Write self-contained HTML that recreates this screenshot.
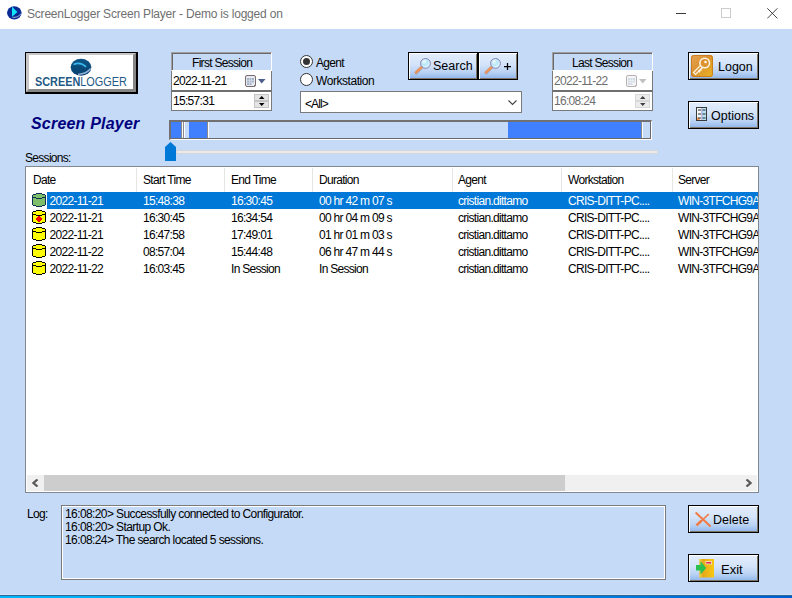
<!DOCTYPE html>
<html><head><meta charset="utf-8">
<style>
*{margin:0;padding:0;box-sizing:border-box}
html,body{width:792px;height:598px;overflow:hidden;background:#C5DAF6;font-family:"Liberation Sans",sans-serif;font-size:12px;color:#000}
.a{position:absolute}
.t{position:absolute;white-space:nowrap;line-height:14px}
.ms{letter-spacing:-0.7px}
#title{left:0;top:0;width:792px;height:29px;background:#fff}
.btn{position:absolute;border:1px solid #000;box-shadow:inset 1px 1px 0 #fff,inset -1px -1px 0 #7f7565;background:linear-gradient(#E4EEFC 0%,#D3E3F9 45%,#B8D1F3 75%,#8DB4EC 100%)}
.grp{position:absolute;width:101px;height:58px}
.glab{position:absolute;left:0;top:0;width:101px;height:18px;border-top:2px solid #6f6f6f;border-left:2px solid #6f6f6f;border-right:1px solid #fff;border-bottom:1px solid #fff;background:#C5DAF6;text-align:center}
.gbox{position:absolute;left:0;width:101px;height:21px;background:#fff;border:1px solid #6f6f6f}
.lv{position:absolute;left:25px;top:166px;width:734px;height:327px;border:1px solid #828790;background:#fff;overflow:hidden}
.row{position:absolute;left:0;height:17px;width:732px}
.cell{position:absolute;top:1px;line-height:17px;white-space:nowrap;letter-spacing:-0.7px}
</style></head><body>
<!-- Title bar -->
<div id="title" class="a">
  <svg class="a" style="left:6px;top:5px" width="17" height="16" viewBox="0 0 17 16">
    <ellipse cx="8.3" cy="7.8" rx="7.3" ry="6.6" fill="#0a2a96"/>
    <path d="M6 1.8 L11.4 7 L6 11.7 Z" fill="#12e6fa"/>
    <path d="M6.5 12.3 Q12 13 15.2 8.5" stroke="#a0b4d0" stroke-width="1" fill="none"/>
  </svg>
  <div class="t" style="left:27px;top:7px;font-size:12px;color:#707070;letter-spacing:-0.2px">ScreenLogger Screen Player - Demo is logged on</div>
  <div class="a" style="left:676px;top:13px;width:10px;height:1px;background:#3a3a3a"></div>
  <div class="a" style="left:721px;top:8px;width:10px;height:10px;border:1px solid #ccc"></div>
  <svg class="a" style="left:767px;top:8px" width="11" height="11" viewBox="0 0 11 11"><path d="M0.3 0.3 L10.4 10.4 M10.4 0.3 L0.3 10.4" stroke="#3a3a3a" stroke-width="0.95"/></svg>
</div>

<!-- Logo -->
<div class="a" style="left:25px;top:52px;width:113px;height:42px;border-top:1px solid #000;border-left:1px solid #000;border-right:2px solid #000;border-bottom:2px solid #000">
  <div class="a" style="left:0;top:0;width:110px;height:39px;background:#fff;border-top:2px solid #c6c6c6;border-left:3px solid #c6c6c6;border-right:3px solid #868686;border-bottom:3px solid #868686"></div>
  <svg class="a" style="left:43px;top:4px" width="24" height="20" viewBox="0 0 24 20">
    <defs><linearGradient id="lgo" x1="0" y1="0" x2="0" y2="1"><stop offset="0" stop-color="#0d5688"/><stop offset="1" stop-color="#073f6c"/></linearGradient></defs>
    <ellipse cx="12" cy="10.2" rx="10.3" ry="8.5" fill="url(#lgo)"/>
    <path d="M4.5 7.5 Q11.5 4.2 17 9.8" stroke="#3ab8ec" stroke-width="1.7" fill="none"/>
    <path d="M9 17.3 Q17.5 17 21.6 11.5" stroke="#90b4dc" stroke-width="1.3" fill="none"/>
  </svg>
  <div class="t" style="left:9px;top:22px;font-size:12.5px;color:#1f5a86;transform:scaleX(0.87);transform-origin:0 0"><b>SCREEN</b>LOGGER</div>
</div>
<div class="t" style="left:31px;top:115px;font-size:16px;font-weight:bold;font-style:italic;color:#00007f;line-height:18px;letter-spacing:0.2px">Screen Player</div>

<!-- First session -->
<div class="a" style="left:171px;top:52px;width:101px;height:19px;border-top:1px solid #a0a0a0;border-left:1px solid #a0a0a0;border-right:1px solid #fff;border-bottom:1px solid #fff;box-shadow:inset 1px 1px 0 #696969"></div>
<div class="t ms" style="left:192px;top:56px;width:60px;text-align:left">First Session</div>
<div class="a" style="left:171px;top:71px;width:101px;height:21px;background:#fff;border-left:1px solid #7a7a7a;border-right:1px solid #7a7a7a;border-bottom:2px solid #6f6f6f"></div>
<div class="t ms" style="left:173px;top:74px;color:#000">2022-11-21</div>
<svg class="a" style="left:245px;top:75px" width="12" height="13" viewBox="0 0 12 13">
<rect x="0.5" y="0.5" width="10" height="11" rx="1.5" fill="#e6eaf2" stroke="#7a6a6a"/>
<g fill="#a8b4c8"><rect x="2" y="3" width="2" height="2"/><rect x="4.5" y="3" width="2" height="2"/><rect x="7" y="3" width="2" height="2"/><rect x="2" y="5.5" width="2" height="2"/><rect x="4.5" y="5.5" width="2" height="2"/><rect x="7" y="5.5" width="2" height="2"/><rect x="2" y="8" width="2" height="2"/><rect x="4.5" y="8" width="2" height="2"/></g>
<path d="M8 12 L11 9" stroke="#7a6a6a" stroke-width="1"/>
</svg>
<svg class="a" style="left:258px;top:79px" width="8" height="5" viewBox="0 0 8 5"><path d="M0 0 H7.5 L3.75 4.5 Z" fill="#4a5f8a"/></svg>
<div class="a" style="left:171px;top:92px;width:101px;height:19px;background:#fff;border-left:1px solid #7a7a7a;border-right:1px solid #7a7a7a;border-bottom:1px solid #7a7a7a"></div>
<div class="t ms" style="left:173px;top:94px;color:#000">15:57:31</div>
<div class="a" style="left:254px;top:94px;width:15px;height:7px;background:#e4e4e4;border:1px solid #c4c4c4"></div>
<div class="a" style="left:254px;top:101px;width:15px;height:7px;background:#e4e4e4;border:1px solid #c4c4c4"></div>
<svg class="a" style="left:259px;top:96px" width="6" height="11" viewBox="0 0 6 11"><path d="M0 3 H5.5 L2.75 0 Z M0 7 H5.5 L2.75 10 Z" fill="#000"/></svg>

<!-- Radios -->
<div class="a" style="left:300px;top:55px;width:13px;height:13px;border-radius:50%;border:1px solid #333;background:#fff"><div class="a" style="left:2px;top:2px;width:7px;height:7px;border-radius:50%;background:#333"></div></div>
<div class="t ms" style="left:316px;top:56px">Agent</div>
<div class="a" style="left:300px;top:73px;width:13px;height:13px;border-radius:50%;border:1px solid #333;background:#fff"></div>
<div class="t" style="left:316px;top:74px;letter-spacing:-0.45px">Workstation</div>
<div class="a" style="left:300px;top:91px;width:222px;height:22px;border:1px solid #7a7a7a;background:#fff">
  <div class="t" style="left:4px;top:5px;letter-spacing:-0.9px">&lt;All&gt;</div>
  <svg class="a" style="left:207px;top:8px" width="10" height="6" viewBox="0 0 10 6"><path d="M0.5 0.5 L4.5 4.5 L8.5 0.5" stroke="#444" stroke-width="1.1" fill="none"/></svg>
</div>

<!-- Search buttons -->
<div class="btn" style="left:408px;top:52px;width:70px;height:28px"></div>
<div class="btn" style="left:478px;top:52px;width:40px;height:28px"></div>
<svg class="a" style="left:412px;top:55px" width="20" height="20" viewBox="0 0 20 20">
<defs><radialGradient id="lg1" cx="0.35" cy="0.3" r="0.75"><stop offset="0" stop-color="#f4fdff"/><stop offset="0.45" stop-color="#b9e6f8"/><stop offset="0.85" stop-color="#d8f6ff"/><stop offset="1" stop-color="#ffffff"/></radialGradient></defs>
<path d="M9.6 12.4 L4.2 17.6" stroke="#5a4a3a" stroke-width="3.2" stroke-linecap="round" opacity="0.35"/>
<path d="M9.4 12.4 L4.0 17.4" stroke="#f2935a" stroke-width="2.6" stroke-linecap="round"/>
<circle cx="13.5" cy="8.4" r="4.9" fill="url(#lg1)" stroke="#8680b0" stroke-width="1"/>
</svg><svg class="a" style="left:482px;top:55px" width="20" height="20" viewBox="0 0 20 20">
<defs><radialGradient id="lg2" cx="0.35" cy="0.3" r="0.75"><stop offset="0" stop-color="#f4fdff"/><stop offset="0.45" stop-color="#b9e6f8"/><stop offset="0.85" stop-color="#d8f6ff"/><stop offset="1" stop-color="#ffffff"/></radialGradient></defs>
<path d="M9.6 12.4 L4.2 17.6" stroke="#5a4a3a" stroke-width="3.2" stroke-linecap="round" opacity="0.35"/>
<path d="M9.4 12.4 L4.0 17.4" stroke="#f2935a" stroke-width="2.6" stroke-linecap="round"/>
<circle cx="13.5" cy="8.4" r="4.9" fill="url(#lg2)" stroke="#8680b0" stroke-width="1"/>
</svg>
<div class="t" style="left:433px;top:59px;font-size:12.5px">Search</div>
<svg class="a" style="left:504px;top:63px" width="8" height="8" viewBox="0 0 8 8"><path d="M0 3.5 H7 M3.5 0 V7" stroke="#000" stroke-width="1.25"/></svg>

<!-- Last session -->
<div class="a" style="left:552px;top:52px;width:101px;height:19px;border-top:1px solid #a0a0a0;border-left:1px solid #a0a0a0;border-right:1px solid #fff;border-bottom:1px solid #fff;box-shadow:inset 1px 1px 0 #696969"></div>
<div class="t ms" style="left:572px;top:56px;width:60px;text-align:left">Last Session</div>
<div class="a" style="left:552px;top:71px;width:101px;height:21px;background:#fff;border-left:1px solid #7a7a7a;border-right:1px solid #7a7a7a;border-bottom:2px solid #6f6f6f"></div>
<div class="t ms" style="left:554px;top:74px;color:#6d6d6d">2022-11-22</div>
<svg class="a" style="left:626px;top:75px" width="12" height="13" viewBox="0 0 12 13">
<rect x="0.5" y="0.5" width="10" height="11" rx="1.5" fill="#f4f6fa" stroke="#b8b0b0"/>
<g fill="#d4dae4"><rect x="2" y="3" width="2" height="2"/><rect x="4.5" y="3" width="2" height="2"/><rect x="7" y="3" width="2" height="2"/><rect x="2" y="5.5" width="2" height="2"/><rect x="4.5" y="5.5" width="2" height="2"/><rect x="7" y="5.5" width="2" height="2"/><rect x="2" y="8" width="2" height="2"/><rect x="4.5" y="8" width="2" height="2"/></g>
<path d="M8 12 L11 9" stroke="#b8b0b0" stroke-width="1"/>
</svg>
<svg class="a" style="left:639px;top:79px" width="8" height="5" viewBox="0 0 8 5"><path d="M0 0 H7.5 L3.75 4.5 Z" fill="#c0c0c0"/></svg>
<div class="a" style="left:552px;top:92px;width:101px;height:19px;background:#fff;border-left:1px solid #7a7a7a;border-right:1px solid #7a7a7a;border-bottom:1px solid #7a7a7a"></div>
<div class="t ms" style="left:554px;top:94px;color:#6d6d6d">16:08:24</div>
<div class="a" style="left:635px;top:94px;width:15px;height:7px;background:#ececec;border:1px solid #d8d8d8"></div>
<div class="a" style="left:635px;top:101px;width:15px;height:7px;background:#ececec;border:1px solid #d8d8d8"></div>
<svg class="a" style="left:640px;top:96px" width="6" height="11" viewBox="0 0 6 11"><path d="M0 3 H5.5 L2.75 0 Z M0 7 H5.5 L2.75 10 Z" fill="#404040"/></svg>

<!-- Right buttons -->
<div class="btn" style="left:688px;top:52px;width:71px;height:28px"></div>
<svg class="a" style="left:691px;top:55px" width="22" height="22" viewBox="0 0 22 22">
<defs><linearGradient id="keyg" x1="0" y1="0" x2="1" y2="1"><stop offset="0" stop-color="#e6a458"/><stop offset="0.45" stop-color="#dc9230"/><stop offset="1" stop-color="#e9b424"/></linearGradient></defs>
<rect x="0" y="0" width="22" height="22" rx="2.8" fill="url(#keyg)"/>
<rect x="0.5" y="0.5" width="21" height="21" rx="2.5" fill="none" stroke="#c27414" stroke-width="1" opacity="0.75"/>
<path d="M10 12 L4.6 17.4" stroke="#fff6e6" stroke-width="4.2" stroke-linecap="square"/>
<path d="M10 12 L4.6 17.4" stroke="#dc9230" stroke-width="1.6" stroke-linecap="square"/>
<path d="M7.4 15.4 L9.2 17.2 M8.9 13.9 L10.6 15.6" stroke="#fff6e6" stroke-width="1.4"/>
<circle cx="13.7" cy="8" r="4.8" fill="#dc9230" stroke="#fff6e6" stroke-width="1.5"/>
<circle cx="14.5" cy="7" r="1.3" fill="#fff6e6"/>
</svg>
<div class="t" style="left:718px;top:60px;font-size:12.5px">Logon</div>
<div class="btn" style="left:688px;top:101px;width:71px;height:28px"></div>
<svg class="a" style="left:695px;top:106px" width="14" height="16" viewBox="0 0 14 16">
<rect x="1.5" y="1.5" width="10" height="13" fill="#f6f9fc"/>
<path d="M7 2 L11.5 2 L11.5 14 L7 14 Z" fill="#b8e4f6"/>
<path d="M2 14.2 L2 11.6 Q4.2 11 5.2 14.2 Z" fill="#f09848"/>
<path d="M6.8 2 V14" stroke="#9080c0" stroke-width="0.7"/>
<g stroke="#2a2a2a" stroke-width="1"><path d="M3 4 H6 M7.5 4 H10.5 M3 8 H6 M7.5 8 H10.5 M3 12 H6 M7.5 12 H10.5"/></g>
<rect x="1.5" y="1.5" width="10" height="13" fill="none" stroke="#3a3a3a" stroke-width="1"/>
</svg>
<div class="t" style="left:711px;top:109px;font-size:12.5px">Options</div>

<!-- Timeline -->
<div class="a" style="left:169px;top:120px;width:483px;height:20px;border-top:2px solid #727070;border-left:2px solid #727070;border-right:1px solid #fff;border-bottom:1px solid #fff">
  <div class="a" style="left:0;top:0;width:480px;height:17px;border-right:1px solid #6a6a6a;border-bottom:1px solid #6a6a6a"></div>
</div>
<div class="a" style="left:171px;top:122px;width:10px;height:16px;background:#4080FF"></div>
<div class="a" style="left:181px;top:122px;width:1px;height:16px;background:#8a8a8a"></div>
<div class="a" style="left:182px;top:122px;width:1px;height:16px;background:#fff"></div>
<div class="a" style="left:183px;top:122px;width:1px;height:16px;background:#8a8a8a"></div>
<div class="a" style="left:184px;top:122px;width:1px;height:16px;background:#fff"></div>
<div class="a" style="left:189px;top:122px;width:18px;height:16px;background:#4080FF"></div>
<div class="a" style="left:207px;top:122px;width:1px;height:16px;background:#8a8a8a"></div>
<div class="a" style="left:208px;top:122px;width:1px;height:16px;background:#fff"></div>
<div class="a" style="left:508px;top:122px;width:133px;height:16px;background:#4080FF"></div>
<div class="a" style="left:641px;top:122px;width:1px;height:16px;background:#8a8a8a"></div>
<div class="a" style="left:642px;top:122px;width:1px;height:16px;background:#fff"></div>

<!-- Slider -->
<div class="a" style="left:176px;top:150px;width:482px;height:4px;background:#e7eaea;border:1px solid #d6d6d6"></div>
<svg class="a" style="left:165px;top:142px" width="11" height="19" viewBox="0 0 11 19"><path d="M5.5 0 L11 5 L11 19 L0 19 L0 5 Z" fill="#0078d7"/></svg>

<div class="t ms" style="left:25px;top:151px">Sessions:</div>

<!-- List view -->
<div class="lv">
<div class="a" style="left:110px;top:1px;width:1px;height:24px;background:#e5e5e5"></div><div class="a" style="left:198px;top:1px;width:1px;height:24px;background:#e5e5e5"></div><div class="a" style="left:286px;top:1px;width:1px;height:24px;background:#e5e5e5"></div><div class="a" style="left:426px;top:1px;width:1px;height:24px;background:#e5e5e5"></div><div class="a" style="left:535px;top:1px;width:1px;height:24px;background:#e5e5e5"></div><div class="a" style="left:646px;top:1px;width:1px;height:24px;background:#e5e5e5"></div>
<div class="t ms" style="left:7px;top:6px">Date</div><div class="t ms" style="left:117px;top:6px">Start Time</div><div class="t ms" style="left:205px;top:6px">End Time</div><div class="t ms" style="left:293px;top:6px">Duration</div><div class="t ms" style="left:432px;top:6px">Agent</div><div class="t ms" style="left:542px;top:6px">Workstation</div><div class="t ms" style="left:652px;top:6px">Server</div>
<div class="row" style="top:25px;color:#fff"><div class="a" style="left:21px;top:0;width:711px;height:17px;background:#0078d7"></div><svg class="a" style="left:4px;top:0" width="16" height="16" viewBox="0 0 16 16" shape-rendering="crispEdges"><path d="M6 2h6v1h-6zM3 3h12v1h-12zM3 4h12v1h-12zM6 5h6v1h-6zM3 6h3v1h-3zM12 6h3v1h-3zM3 7h12v1h-12zM3 8h12v1h-12zM3 9h12v1h-12zM3 10h12v1h-12zM3 11h12v1h-12zM3 12h12v1h-12zM6 13h6v1h-6z" fill="#7fbf6a"/><path d="M6 1h6v1h-6zM3 2h3v1h-3zM12 2h3v1h-3zM2 3h1v1h-1zM15 3h1v1h-1zM2 4h1v1h-1zM15 4h1v1h-1zM2 5h4v1h-4zM12 5h4v1h-4zM2 6h1v1h-1zM6 6h6v1h-6zM15 6h1v1h-1zM2 7h1v1h-1zM15 7h1v1h-1zM2 8h1v1h-1zM15 8h1v1h-1zM2 9h1v1h-1zM15 9h1v1h-1zM2 10h1v1h-1zM15 10h1v1h-1zM2 11h1v1h-1zM15 11h1v1h-1zM2 12h1v1h-1zM15 12h1v1h-1zM3 13h3v1h-3zM12 13h3v1h-3zM6 14h6v1h-6z" fill="#0d2f55"/></svg><div class="cell" style="left:23.5px">2022-11-21</div><div class="cell" style="left:117px">15:48:38</div><div class="cell" style="left:205px">16:30:45</div><div class="cell" style="left:293px">00 hr 42 m 07 s</div><div class="cell" style="left:432px">cristian.dittamo</div><div class="cell" style="left:542px">CRIS-DITT-PC....</div><div class="cell" style="left:652px">WIN-3TFCHG9A</div></div>
<div class="row" style="top:42px;color:#000"><svg class="a" style="left:4px;top:0" width="16" height="16" viewBox="0 0 16 16" shape-rendering="crispEdges"><path d="M6 2h6v1h-6zM3 3h12v1h-12zM3 4h12v1h-12zM6 5h6v1h-6zM3 6h3v1h-3zM12 6h3v1h-3zM3 7h12v1h-12zM3 8h12v1h-12zM3 9h12v1h-12zM3 10h12v1h-12zM3 11h12v1h-12zM3 12h12v1h-12zM6 13h6v1h-6z" fill="#ffff00"/><path d="M6 1h6v1h-6zM3 2h3v1h-3zM12 2h3v1h-3zM2 3h1v1h-1zM15 3h1v1h-1zM2 4h1v1h-1zM15 4h1v1h-1zM2 5h4v1h-4zM12 5h4v1h-4zM2 6h1v1h-1zM6 6h6v1h-6zM15 6h1v1h-1zM2 7h1v1h-1zM15 7h1v1h-1zM2 8h1v1h-1zM15 8h1v1h-1zM2 9h1v1h-1zM15 9h1v1h-1zM2 10h1v1h-1zM15 10h1v1h-1zM2 11h1v1h-1zM15 11h1v1h-1zM2 12h1v1h-1zM15 12h1v1h-1zM3 13h3v1h-3zM12 13h3v1h-3zM6 14h6v1h-6z" fill="#000"/><path d="M8 7h2v1h-2zM7 8h4v1h-4zM6 9h6v1h-6zM6 10h6v1h-6zM7 11h4v1h-4zM8 12h2v1h-2z" fill="#ff0000"/></svg><div class="cell" style="left:23.5px">2022-11-21</div><div class="cell" style="left:117px">16:30:45</div><div class="cell" style="left:205px">16:34:54</div><div class="cell" style="left:293px">00 hr 04 m 09 s</div><div class="cell" style="left:432px">cristian.dittamo</div><div class="cell" style="left:542px">CRIS-DITT-PC....</div><div class="cell" style="left:652px">WIN-3TFCHG9A</div></div>
<div class="row" style="top:59px;color:#000"><svg class="a" style="left:4px;top:0" width="16" height="16" viewBox="0 0 16 16" shape-rendering="crispEdges"><path d="M6 2h6v1h-6zM3 3h12v1h-12zM3 4h12v1h-12zM6 5h6v1h-6zM3 6h3v1h-3zM12 6h3v1h-3zM3 7h12v1h-12zM3 8h12v1h-12zM3 9h12v1h-12zM3 10h12v1h-12zM3 11h12v1h-12zM3 12h12v1h-12zM6 13h6v1h-6z" fill="#ffff00"/><path d="M6 1h6v1h-6zM3 2h3v1h-3zM12 2h3v1h-3zM2 3h1v1h-1zM15 3h1v1h-1zM2 4h1v1h-1zM15 4h1v1h-1zM2 5h4v1h-4zM12 5h4v1h-4zM2 6h1v1h-1zM6 6h6v1h-6zM15 6h1v1h-1zM2 7h1v1h-1zM15 7h1v1h-1zM2 8h1v1h-1zM15 8h1v1h-1zM2 9h1v1h-1zM15 9h1v1h-1zM2 10h1v1h-1zM15 10h1v1h-1zM2 11h1v1h-1zM15 11h1v1h-1zM2 12h1v1h-1zM15 12h1v1h-1zM3 13h3v1h-3zM12 13h3v1h-3zM6 14h6v1h-6z" fill="#000"/></svg><div class="cell" style="left:23.5px">2022-11-21</div><div class="cell" style="left:117px">16:47:58</div><div class="cell" style="left:205px">17:49:01</div><div class="cell" style="left:293px">01 hr 01 m 03 s</div><div class="cell" style="left:432px">cristian.dittamo</div><div class="cell" style="left:542px">CRIS-DITT-PC....</div><div class="cell" style="left:652px">WIN-3TFCHG9A</div></div>
<div class="row" style="top:76px;color:#000"><svg class="a" style="left:4px;top:0" width="16" height="16" viewBox="0 0 16 16" shape-rendering="crispEdges"><path d="M6 2h6v1h-6zM3 3h12v1h-12zM3 4h12v1h-12zM6 5h6v1h-6zM3 6h3v1h-3zM12 6h3v1h-3zM3 7h12v1h-12zM3 8h12v1h-12zM3 9h12v1h-12zM3 10h12v1h-12zM3 11h12v1h-12zM3 12h12v1h-12zM6 13h6v1h-6z" fill="#ffff00"/><path d="M6 1h6v1h-6zM3 2h3v1h-3zM12 2h3v1h-3zM2 3h1v1h-1zM15 3h1v1h-1zM2 4h1v1h-1zM15 4h1v1h-1zM2 5h4v1h-4zM12 5h4v1h-4zM2 6h1v1h-1zM6 6h6v1h-6zM15 6h1v1h-1zM2 7h1v1h-1zM15 7h1v1h-1zM2 8h1v1h-1zM15 8h1v1h-1zM2 9h1v1h-1zM15 9h1v1h-1zM2 10h1v1h-1zM15 10h1v1h-1zM2 11h1v1h-1zM15 11h1v1h-1zM2 12h1v1h-1zM15 12h1v1h-1zM3 13h3v1h-3zM12 13h3v1h-3zM6 14h6v1h-6z" fill="#000"/></svg><div class="cell" style="left:23.5px">2022-11-22</div><div class="cell" style="left:117px">08:57:04</div><div class="cell" style="left:205px">15:44:48</div><div class="cell" style="left:293px">06 hr 47 m 44 s</div><div class="cell" style="left:432px">cristian.dittamo</div><div class="cell" style="left:542px">CRIS-DITT-PC....</div><div class="cell" style="left:652px">WIN-3TFCHG9A</div></div>
<div class="row" style="top:93px;color:#000"><svg class="a" style="left:4px;top:0" width="16" height="16" viewBox="0 0 16 16" shape-rendering="crispEdges"><path d="M6 2h6v1h-6zM3 3h12v1h-12zM3 4h12v1h-12zM6 5h6v1h-6zM3 6h3v1h-3zM12 6h3v1h-3zM3 7h12v1h-12zM3 8h12v1h-12zM3 9h12v1h-12zM3 10h12v1h-12zM3 11h12v1h-12zM3 12h12v1h-12zM6 13h6v1h-6z" fill="#ffff00"/><path d="M6 1h6v1h-6zM3 2h3v1h-3zM12 2h3v1h-3zM2 3h1v1h-1zM15 3h1v1h-1zM2 4h1v1h-1zM15 4h1v1h-1zM2 5h4v1h-4zM12 5h4v1h-4zM2 6h1v1h-1zM6 6h6v1h-6zM15 6h1v1h-1zM2 7h1v1h-1zM15 7h1v1h-1zM2 8h1v1h-1zM15 8h1v1h-1zM2 9h1v1h-1zM15 9h1v1h-1zM2 10h1v1h-1zM15 10h1v1h-1zM2 11h1v1h-1zM15 11h1v1h-1zM2 12h1v1h-1zM15 12h1v1h-1zM3 13h3v1h-3zM12 13h3v1h-3zM6 14h6v1h-6z" fill="#000"/></svg><div class="cell" style="left:23.5px">2022-11-22</div><div class="cell" style="left:117px">16:03:45</div><div class="cell" style="left:205px">In Session</div><div class="cell" style="left:293px">In Session</div><div class="cell" style="left:432px">cristian.dittamo</div><div class="cell" style="left:542px">CRIS-DITT-PC....</div><div class="cell" style="left:652px">WIN-3TFCHG9A</div></div>
<div class="a" style="left:1px;top:308px;width:730px;height:16px;background:#f0f0f0"><div class="a" style="left:17px;top:0;width:521px;height:16px;background:#cdcdcd"></div><svg class="a" style="left:5px;top:4px" width="7" height="8" viewBox="0 0 7 8"><path d="M5.5 0.5 L1.5 4 L5.5 7.5" stroke="#5a5a5a" stroke-width="2.3" fill="none"/></svg><svg class="a" style="left:718px;top:4px" width="7" height="8" viewBox="0 0 7 8"><path d="M1.5 0.5 L5.5 4 L1.5 7.5" stroke="#5a5a5a" stroke-width="2.3" fill="none"/></svg></div>
</div>

<!-- Log -->
<div class="t ms" style="left:27px;top:507px">Log:</div>
<div class="a" style="left:61px;top:505px;width:605px;height:75px;border:1px solid #7a7a7a;box-shadow:inset 1px 1px 0 #fff,inset -1px -1px 0 #fff;background:#C5DAF6">
  <div class="t" style="left:3px;top:2px;line-height:13px;letter-spacing:-0.6px">16:08:20&gt; Successfully connected to Configurator.<br>16:08:20&gt; Startup Ok.<br>16:08:24&gt; The search located 5 sessions.</div>
</div>

<div class="btn" style="left:688px;top:505px;width:71px;height:28px"></div>
<svg class="a" style="left:693px;top:510px" width="20" height="20" viewBox="0 0 20 20">
<path d="M2.6 2.6 L17.6 16.6" stroke="#f27a45" stroke-width="2"/>
<path d="M3.8 15 L15.8 4.2" stroke="#f27a45" stroke-width="1.6"/>
<path d="M3.4 15.4 L8.5 10.8" stroke="#f27a45" stroke-width="2.6"/>
</svg>
<div class="t" style="left:713px;top:513px;font-size:12.5px">Delete</div>
<div class="btn" style="left:688px;top:554px;width:71px;height:28px"></div>
<svg class="a" style="left:695px;top:558px" width="20" height="21" viewBox="0 0 20 21">
<defs><linearGradient id="doorg" x1="0" y1="0" x2="1" y2="0"><stop offset="0" stop-color="#e0a020"/><stop offset="1" stop-color="#f8c810"/></linearGradient></defs>
<rect x="4.5" y="1" width="14.5" height="18.5" fill="url(#doorg)"/>
<rect x="4.5" y="1" width="2" height="18.5" fill="#f0d040"/>
<rect x="10.5" y="3.2" width="6.5" height="3.2" fill="#f4e8d0"/>
<rect x="11.2" y="4" width="5" height="1.6" fill="#e03050"/>
<path d="M1 7 H5.5 V3 L11.2 10 L5.5 16.5 V12.5 H1 Z" fill="#2cc050"/>
</svg>
<div class="t" style="left:721px;top:563px;font-size:13px">Exit</div>

<!-- bottom bar -->
<div class="a" style="left:0;top:594px;width:792px;height:1px;background:#d2e2f8"></div>
<div class="a" style="left:0;top:595px;width:792px;height:1px;background:#2d6a95"></div>
<div class="a" style="left:0;top:596px;width:792px;height:2px;background:linear-gradient(90deg,#00b6fa 0%,#00a0ee 45%,#0080e0 72%,#005ecf 100%)"></div>
</body></html>
